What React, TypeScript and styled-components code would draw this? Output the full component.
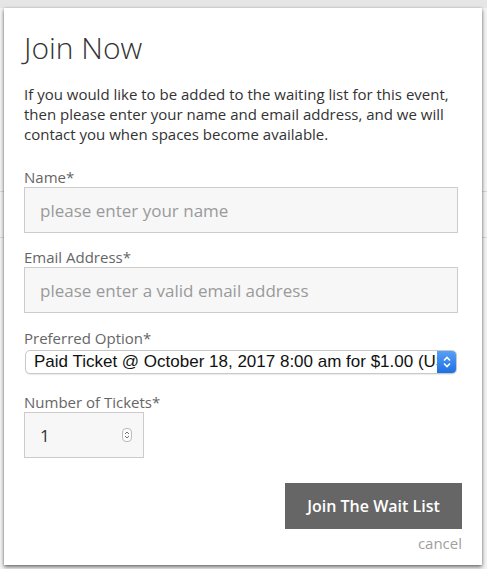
import React from "react";
import styled, { createGlobalStyle } from "styled-components";

const Global = createGlobalStyle`
  html, body { margin: 0; padding: 0; }
  body {
    width: 487px;
    height: 569px;
    overflow: hidden;
    background: #e9e9e9;
    font-family: "Open Sans", "Liberation Sans", sans-serif;
  }
`;

const Page = styled.div`
  position: relative;
  width: 487px;
  height: 569px;
  background: #f4f4f4;
  overflow: hidden;
`;

const PageTop = styled.div`
  height: 8px;
  background: #e6e6e6;
`;

const PageRule = styled.div<{ $top: number }>`
  height: 1px;
  margin-top: ${(p) => p.$top}px;
  background: #d8d8d8;
`;

const Modal = styled.div`
  position: absolute;
  left: 4px;
  top: 8px;
  width: 478px;
  height: 557px;
  box-sizing: border-box;
  background: #ffffff;
  box-shadow: 0 2px 4px rgba(0, 0, 0, 0.55), 0 0 2px rgba(0, 0, 0, 0.15);
  padding: 20px 24px 0 20px;
  display: flex;
  flex-direction: column;
`;

const Title = styled.h1`
  margin: 0;
  font-family: "Open Sans", sans-serif;
  font-weight: 300;
  font-size: 30px;
  line-height: 40px;
  color: #333333;
`;

const Intro = styled.p`
  margin: 16px 0 0 0;
  font-size: 15px;
  line-height: 20px;
  color: #333333;
`;

const Field = styled.div<{ $mt: number }>`
  display: flex;
  flex-direction: column;
  align-items: flex-start;
  margin-top: ${(p) => p.$mt}px;
`;

const Label = styled.label`
  font-size: 15px;
  line-height: 20px;
  color: #666666;
`;

const TextBox = styled.div<{ $w?: number }>`
  box-sizing: border-box;
  width: ${(p) => (p.$w ? `${p.$w}px` : "100%")};
  height: 46px;
  background: #f7f7f7;
  border: 1px solid #cccccc;
  padding: 0 15px;
  display: flex;
  align-items: center;
  justify-content: space-between;
  font-size: 17px;
  color: #333333;
`;

const Placeholder = styled.span`
  color: #9a9a9a;
`;

const SelectBox = styled.div`
  box-sizing: border-box;
  margin: 2px 0 0 1px;
  width: 432px;
  height: 24px;
  background: #ffffff;
  border: 1px solid #c9c9c9;
  border-radius: 5px;
  display: flex;
  align-items: center;
  overflow: hidden;
  box-shadow: 0 1px 1px rgba(0, 0, 0, 0.08);
`;

const SelectText = styled.span`
  flex: 1;
  padding-left: 8px;
  white-space: nowrap;
  overflow: hidden;
  font-family: "Liberation Sans", Arial, sans-serif;
  font-size: 17px;
  color: #111111;
`;

const Stepper = styled.span`
  width: 20px;
  height: 24px;
  margin-right: -1px;
  background: linear-gradient(#5aa2f7, #1c6de3);
  border-radius: 0 5px 5px 0;
  display: flex;
  align-items: center;
  justify-content: center;
`;

const Spinner = styled.span`
  width: 8px;
  height: 12px;
  border: 1px solid #bdbdbd;
  border-radius: 4px;
  background: #fafafa;
  display: flex;
  align-items: center;
  justify-content: center;
  margin-right: -4px;
`;

const Actions = styled.div`
  margin: 25px -4px 0 0;
  display: flex;
  flex-direction: column;
  align-items: flex-end;
`;

const Button = styled.button`
  width: 177px;
  height: 46px;
  border: none;
  background: #666666;
  color: #ffffff;
  font-family: "Open Sans", sans-serif;
  font-weight: 600;
  font-size: 16px;
  padding: 0;
`;

const Cancel = styled.a`
  margin-top: 4px;
  font-size: 15px;
  line-height: 20px;
  color: #a0a0a0;
  text-decoration: none;
`;

export default function App() {
  return (
    <>
      <Global />
      <Page>
        <PageTop />
        <PageRule $top={183} />
        <PageRule $top={45} />
        <Modal>
          <Title>Join Now</Title>
          <Intro>
            If you would like to be added to the waiting list for this event,
            then please enter your name and email address, and we will
            contact you when spaces become available.
          </Intro>
          <Field $mt={23}>
            <Label>Name*</Label>
            <TextBox>
              <Placeholder>please enter your name</Placeholder>
            </TextBox>
          </Field>
          <Field $mt={14}>
            <Label>Email Address*</Label>
            <TextBox>
              <Placeholder>please enter a valid email address</Placeholder>
            </TextBox>
          </Field>
          <Field $mt={15}>
            <Label>Preferred Option*</Label>
            <SelectBox>
              <SelectText>
                Paid Ticket @ October 18, 2017 8:00 am for $1.00 (USD)
              </SelectText>
              <Stepper>
                <svg width="10" height="14" viewBox="0 0 10 14">
                  <path d="M2 5.5 L5 2.5 L8 5.5" fill="none" stroke="#fff" strokeWidth="1.6" />
                  <path d="M2 8.5 L5 11.5 L8 8.5" fill="none" stroke="#fff" strokeWidth="1.6" />
                </svg>
              </Stepper>
            </SelectBox>
          </Field>
          <Field $mt={18}>
            <Label>Number of Tickets*</Label>
            <TextBox $w={120}>
              <span>1</span>
              <Spinner>
                <svg width="6" height="10" viewBox="0 0 6 10">
                  <path d="M1 4 L3 2 L5 4" fill="none" stroke="#666" strokeWidth="0.9" />
                  <path d="M1 6 L3 8 L5 6" fill="none" stroke="#666" strokeWidth="0.9" />
                </svg>
              </Spinner>
            </TextBox>
          </Field>
          <Actions>
            <Button>Join The Wait List</Button>
            <Cancel href="#">cancel</Cancel>
          </Actions>
        </Modal>
      </Page>
    </>
  );
}
